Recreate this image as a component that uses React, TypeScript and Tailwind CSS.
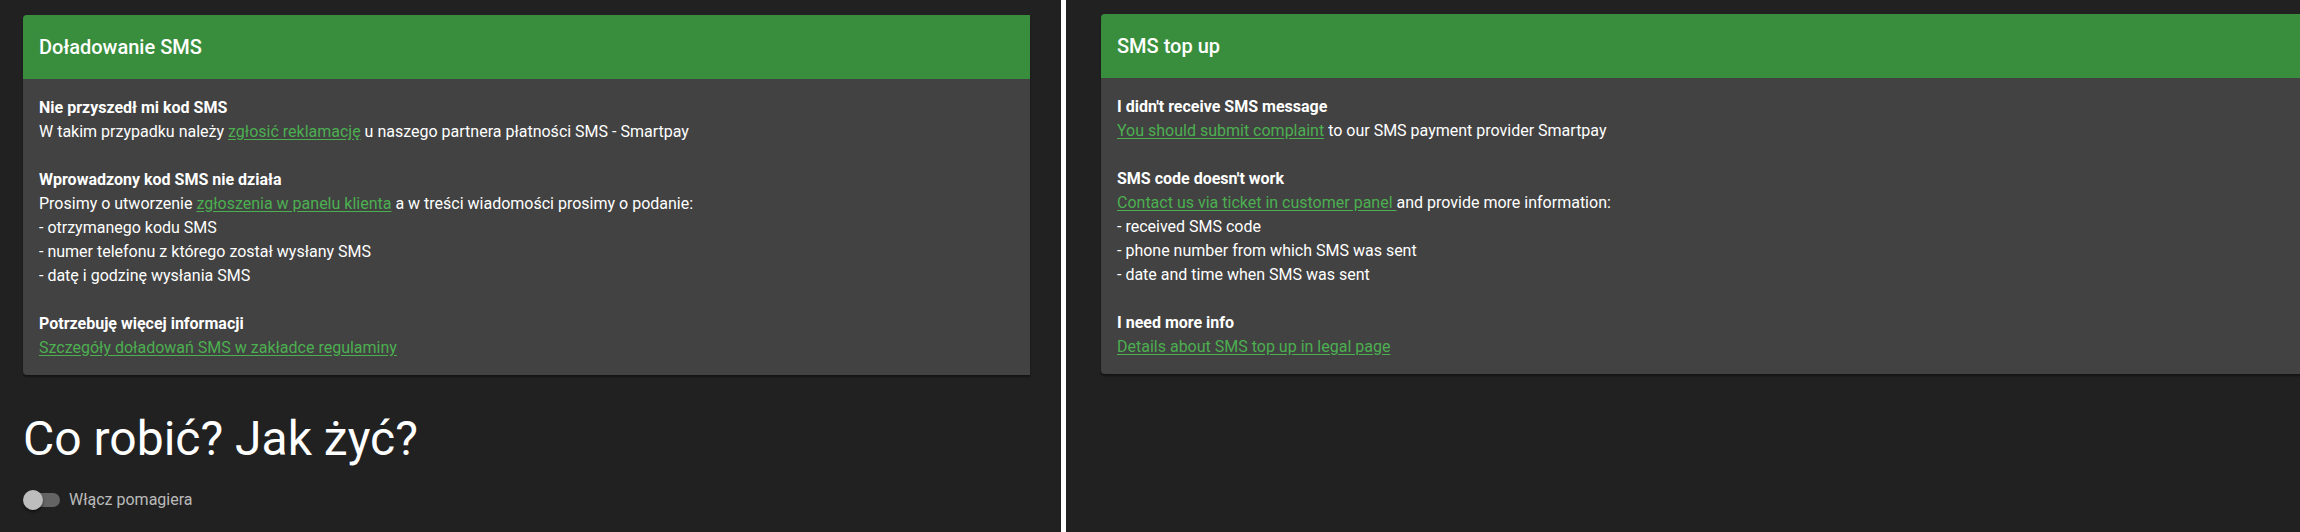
import React from 'react'

type Section = {
    title: string
    lines: React.ReactNode[]
}

function Link({ children }: { children: React.ReactNode }) {
    return <a href="#" className="text-[#4caf50] underline underline-offset-2">{children}</a>
}

const plSections: Section[] = [
    {
        title: 'Nie przyszedł mi kod SMS',
        lines: [
            <>W takim przypadku należy <Link>zgłosić reklamację</Link> u naszego partnera płatności SMS - Smartpay</>,
        ],
    },
    {
        title: 'Wprowadzony kod SMS nie działa',
        lines: [
            <>Prosimy o utworzenie <Link>zgłoszenia w panelu klienta</Link> a w treści wiadomości prosimy o podanie:</>,
            '- otrzymanego kodu SMS',
            '- numer telefonu z którego został wysłany SMS',
            '- datę i godzinę wysłania SMS',
        ],
    },
    {
        title: 'Potrzebuję więcej informacji',
        lines: [<Link>Szczegóły doładowań SMS w zakładce regulaminy</Link>],
    },
]

const enSections: Section[] = [
    {
        title: "I didn't receive SMS message",
        lines: [<><Link>You should submit complaint</Link> to our SMS payment provider Smartpay</>],
    },
    {
        title: "SMS code doesn't work",
        lines: [
            <><Link>Contact us via ticket in customer panel </Link>and provide more information:</>,
            '- received SMS code',
            '- phone number from which SMS was sent',
            '- date and time when SMS was sent',
        ],
    },
    {
        title: 'I need more info',
        lines: [<Link>Details about SMS top up in legal page</Link>],
    },
]

function Card({ title, sections, className }: { title: string; sections: Section[]; className: string }) {
    return (
        <div className={`shrink-0 overflow-hidden bg-[#424242] shadow-[0_2px_2px_rgba(0,0,0,0.4)] ${className}`}>
            <div className="flex h-[64px] items-center bg-[#388e3c] px-4">
                <h2 className="text-[20px] leading-[28px] font-medium text-white">{title}</h2>
            </div>
            <div className="flex flex-col gap-6 px-4 pt-[17px] pb-[15px] text-[16px] leading-[24px] text-white">
                {sections.map((s) => (
                    <div key={s.title}>
                        <p className="font-bold">{s.title}</p>
                        {s.lines.map((l, i) => (
                            <p key={i}>{l}</p>
                        ))}
                    </div>
                ))}
            </div>
        </div>
    )
}

export default function App() {
    return (
        <div className="flex h-[532px] w-[2300px] overflow-hidden bg-[#212121] font-['Roboto','Liberation_Sans',sans-serif]">

            <div className="w-[1061px] shrink-0 overflow-hidden pt-[15px] pl-[23px]">
                <Card title="Doładowanie SMS" sections={plSections} className="w-[1007px] rounded-l-[4px]" />

                <h1 className="mt-[36px] text-[48px] leading-[56px] font-normal text-white">Co robić? Jak żyć?</h1>

                <div className="mt-[21px] flex items-center">
                    <div className="relative h-[20px] w-[38px]">
                        <div className="absolute top-[3px] left-[3px] h-[14px] w-[34px] rounded-full bg-white/30" />
                        <div className="absolute top-0 left-0 h-[20px] w-[20px] rounded-full bg-[#bdbdbd] shadow-[0_2px_3px_rgba(0,0,0,0.5)]" />
                    </div>
                    <span className="ml-[8px] text-[16px] leading-[24px] text-white/70">Włącz pomagiera</span>
                </div>
            </div>

            <div className="w-[5px] shrink-0 bg-white" />

            <div className="flex-1 overflow-hidden pt-[14px] pl-[35px]">
                <Card title="SMS top up" sections={enSections} className="w-[1400px] rounded-[4px]" />
            </div>

        </div>
    )
}
